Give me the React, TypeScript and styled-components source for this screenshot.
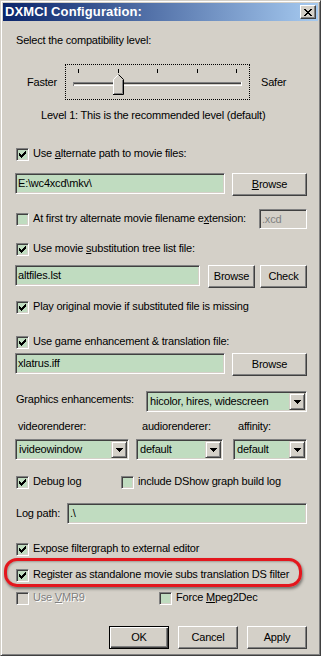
import React from 'react';
import styled, { createGlobalStyle } from 'styled-components';

const FACE = '#d4d0c8';
const GREEN = '#c0dcc0';

const GlobalStyle = createGlobalStyle`
  html, body {
    margin: 0;
    padding: 0;
    background: ${FACE};
  }
  body {
    font-family: "Liberation Sans", Arial, sans-serif;
    font-size: 11px;
    line-height: 13px;
    letter-spacing: -0.2px;
    color: #000;
  }
`;

const Window = styled.div`
  box-sizing: border-box;
  width: 321px;
  height: 656px;
  padding: 2px;
  background: ${FACE};
  border: 1px solid;
  border-color: ${FACE} #404040 #404040 ${FACE};
  box-shadow: inset 1px 1px #fff, inset -1px -1px #808080;
  display: flex;
  flex-direction: column;
`;

const TitleBar = styled.div`
  height: 18px;
  flex: none;
  display: flex;
  align-items: center;
  justify-content: space-between;
  padding: 0 2px;
  background: linear-gradient(to right, #0a246a, #a6caf0);
`;

const Title = styled.span`
  font-weight: bold;
  font-size: 13px;
  line-height: 18px;
  letter-spacing: 0.1px;
  color: #fff;
`;

const CloseButton = styled.div`
  box-sizing: border-box;
  width: 16px;
  height: 14px;
  background: ${FACE};
  border: 1px solid;
  border-color: #fff #404040 #404040 #fff;
  box-shadow: inset -1px -1px #808080;
  display: flex;
  align-items: center;
  justify-content: center;
`;

const Body = styled.div`
  display: flex;
  flex-direction: column;
  padding: 13px 11px 0 12px;
`;

const Text = styled.div<{ $mt?: number; $ml?: number }>`
  margin-top: ${p => p.$mt || 0}px;
  margin-left: ${p => p.$ml || 0}px;
  white-space: nowrap;
`;

const Key = styled.span`
  text-decoration: underline;
`;

const SliderRow = styled.div`
  display: flex;
  align-items: center;
  margin-top: 17px;
  padding-left: 12px;
`;

const SliderLabel = styled.span<{ $w?: number; $ml?: number }>`
  width: ${p => (p.$w ? p.$w + 'px' : 'auto')};
  margin-left: ${p => p.$ml || 0}px;
`;

const SliderBox = styled.div`
  box-sizing: border-box;
  width: 185px;
  height: 36px;
  border: 1px dotted #000;
  svg {
    display: block;
  }
`;

const CheckRow = styled.div<{ $mt?: number }>`
  position: relative;
  display: flex;
  align-items: flex-start;
  margin-top: ${p => p.$mt || 0}px;
`;

const Box = styled.span<{ $disabled?: boolean }>`
  box-sizing: border-box;
  flex: none;
  width: 13px;
  height: 13px;
  margin: 1px 0 0 1px;
  border: 1px solid;
  border-color: #808080 #fff #fff #808080;
  box-shadow: inset 1px 1px #404040, inset -1px -1px ${FACE};
  background: ${p => (p.$disabled ? FACE : GREEN)};
  display: flex;
  align-items: center;
  justify-content: center;
`;

const CheckLabel = styled.span<{ $disabled?: boolean }>`
  padding-left: 4px;
  white-space: nowrap;
  color: ${p => (p.$disabled ? '#808080' : '#000')};
  text-shadow: ${p => (p.$disabled ? '1px 1px #fff' : 'none')};
`;

const Highlight = styled.span`
  position: absolute;
  left: -11px;
  top: -10px;
  width: 298px;
  height: 29px;
  box-sizing: border-box;
  border: 3px solid #e3161d;
  border-radius: 13px;
  box-shadow: 1px 2px 3px rgba(0, 0, 0, 0.45), inset 1px 1px 2px rgba(0, 0, 0, 0.25);
  pointer-events: none;
`;

const FieldRow = styled.div<{ $mt?: number; $align?: string }>`
  display: flex;
  align-items: ${p => p.$align || 'flex-start'};
  margin-top: ${p => p.$mt || 0}px;
`;

const Edit = styled.div<{ $w: number; $h?: number; $disabled?: boolean; $push?: boolean }>`
  box-sizing: border-box;
  flex: none;
  width: ${p => p.$w}px;
  height: ${p => p.$h || 21}px;
  margin-left: ${p => (p.$push ? 'auto' : '0')};
  padding: 0 2px;
  border: 1px solid;
  border-color: #808080 #fff #fff #808080;
  box-shadow: inset 1px 1px #404040, inset -1px -1px ${FACE};
  background: ${p => (p.$disabled ? FACE : GREEN)};
  color: ${p => (p.$disabled ? '#808080' : '#000')};
  display: flex;
  align-items: center;
  white-space: nowrap;
  overflow: hidden;
`;

const Button = styled.div<{ $w: number; $gap?: number; $default?: boolean }>`
  box-sizing: border-box;
  flex: none;
  width: ${p => p.$w}px;
  height: 23px;
  margin-left: ${p => p.$gap || 0}px;
  background: ${FACE};
  border: 1px solid;
  border-color: ${p => (p.$default ? '#000' : '#fff #404040 #404040 #fff')};
  box-shadow: ${p =>
    p.$default
      ? 'inset 1px 1px #fff, inset -1px -1px #404040, inset -2px -2px #808080'
      : 'inset -1px -1px #808080'};
  display: flex;
  align-items: center;
  justify-content: center;
`;

const Combo = styled.div<{ $w: number; $push?: boolean }>`
  box-sizing: border-box;
  width: ${p => p.$w}px;
  height: 21px;
  margin-left: ${p => (p.$push ? 'auto' : '0')};
  padding: 1px;
  border: 1px solid;
  border-color: #808080 #fff #fff #808080;
  box-shadow: inset 1px 1px #404040, inset -1px -1px ${FACE};
  background: ${GREEN};
  display: flex;
`;

const ComboText = styled.span`
  flex: 1;
  padding-left: 2px;
  display: flex;
  align-items: center;
  white-space: nowrap;
`;

const ComboButton = styled.span`
  box-sizing: border-box;
  width: 16px;
  height: 17px;
  background: ${FACE};
  border: 1px solid;
  border-color: ${FACE} #404040 #404040 ${FACE};
  box-shadow: inset 1px 1px #fff, inset -1px -1px #808080;
  display: flex;
  align-items: center;
  justify-content: center;
`;

const RendererGrid = styled.div`
  display: grid;
  grid-template-columns: 121px 97px 74px;
  row-gap: 6px;
  margin-top: 8px;
`;

const GridLabel = styled.span<{ $pl: number }>`
  padding-left: ${p => p.$pl}px;
`;

const PairRow = styled.div<{ $mt: number; $col: number }>`
  display: grid;
  grid-template-columns: ${p => p.$col}px auto;
  margin-top: ${p => p.$mt}px;
`;

const ButtonBar = styled.div`
  display: flex;
  justify-content: flex-end;
  margin-top: 21px;
`;

const CheckMark = () => (
  <svg width="7" height="7" viewBox="0 0 7 7" shapeRendering="crispEdges">
    {[2, 3, 4, 3, 2, 1, 0].map((y, x) => (
      <rect key={x} x={x} y={y} width="1" height="3" fill="#000" />
    ))}
  </svg>
);

const CloseGlyph = () => (
  <svg width="8" height="7" viewBox="0 0 8 7" shapeRendering="crispEdges">
    <rect x="0" y="0" width="2" height="1" />
    <rect x="6" y="0" width="2" height="1" />
    <rect x="1" y="1" width="2" height="1" />
    <rect x="5" y="1" width="2" height="1" />
    <rect x="2" y="2" width="4" height="1" />
    <rect x="3" y="3" width="2" height="1" />
    <rect x="2" y="4" width="4" height="1" />
    <rect x="1" y="5" width="2" height="1" />
    <rect x="5" y="5" width="2" height="1" />
    <rect x="0" y="6" width="2" height="1" />
    <rect x="6" y="6" width="2" height="1" />
  </svg>
);

const DownArrow = () => (
  <svg width="7" height="4" viewBox="0 0 7 4" shapeRendering="crispEdges">
    <rect x="0" y="0" width="7" height="1" />
    <rect x="1" y="1" width="5" height="1" />
    <rect x="2" y="2" width="3" height="1" />
    <rect x="3" y="3" width="1" height="1" />
  </svg>
);

const TrackBar = () => (
  <svg width="183" height="34" viewBox="0 0 183 34" shapeRendering="crispEdges">
    {[12, 52, 91, 131, 170].map(x => (
      <rect key={x} x={x} y="4" width="1" height="4" fill="#000" />
    ))}
    <rect x="7" y="17" width="169" height="1" fill="#808080" />
    <rect x="7" y="18" width="169" height="1" fill="#404040" />
    <rect x="7" y="19" width="169" height="1" fill="#d4d0c8" />
    <rect x="7" y="20" width="169" height="1" fill="#fff" />
    <rect x="7" y="17" width="1" height="4" fill="#808080" />
    <rect x="175" y="17" width="1" height="4" fill="#fff" />
    <polygon points="47,15 52.5,9.5 58,15 58,30 47,30" fill="#d4d0c8" shapeRendering="auto" />
    <path d="M47.5 29.5 V14.5 L52.5 9.5" stroke="#fff" fill="none" shapeRendering="auto" />
    <path d="M52.5 9.5 L57.5 14.5 V29.5 H47" stroke="#000" fill="none" shapeRendering="auto" />
    <path d="M56.5 15 V28.5 H48" stroke="#808080" fill="none" shapeRendering="auto" />
  </svg>
);

const Check: React.FC<{ checked?: boolean; disabled?: boolean; children: React.ReactNode }> = ({
  checked,
  disabled,
  children,
}) => (
  <>
    <Box $disabled={disabled}>{checked && <CheckMark />}</Box>
    <CheckLabel $disabled={disabled}>{children}</CheckLabel>
  </>
);

const App: React.FC = () => (
  <>
    <GlobalStyle />
    <Window>
      <TitleBar>
        <Title>DXMCI Configuration:</Title>
        <CloseButton>
          <CloseGlyph />
        </CloseButton>
      </TitleBar>
      <Body>
        <Text $ml={1}>Select the compatibility level:</Text>
        <SliderRow>
          <SliderLabel $w={38}>Faster</SliderLabel>
          <SliderBox>
            <TrackBar />
          </SliderBox>
          <SliderLabel $ml={11}>Safer</SliderLabel>
        </SliderRow>
        <Text $mt={9} $ml={26}>
          Level 1: This is the recommended level (default)
        </Text>

        <CheckRow $mt={25}>
          <Check checked>
            Use <Key>a</Key>lternate path to movie files:
          </Check>
        </CheckRow>
        <FieldRow $mt={12}>
          <Edit $w={210}>E:\wc4xcd\mkv\</Edit>
          <Button $w={75} $gap={7}>
            <span>
              <Key>B</Key>rowse
            </span>
          </Button>
        </FieldRow>

        <FieldRow $mt={13} $align="center">
          <CheckRow>
            <Check>
              At first try alternate movie filename e<Key>x</Key>tension:
            </Check>
          </CheckRow>
          <Edit $w={48} $h={20} $disabled $push>
            .xcd
          </Edit>
        </FieldRow>

        <CheckRow $mt={13}>
          <Check checked>
            Use movie <Key>s</Key>ubstitution tree list file:
          </Check>
        </CheckRow>
        <FieldRow $mt={9}>
          <Edit $w={185}>altfiles.lst</Edit>
          <Button $w={47} $gap={8}>
            Browse
          </Button>
          <Button $w={47} $gap={5}>
            Check
          </Button>
        </FieldRow>

        <CheckRow $mt={12}>
          <Check checked>Play original movie if substituted file is missing</Check>
        </CheckRow>

        <CheckRow $mt={21}>
          <Check checked>Use game enhancement &amp; translation file:</Check>
        </CheckRow>
        <FieldRow $mt={4}>
          <Edit $w={210}>xlatrus.iff</Edit>
          <Button $w={75} $gap={7}>
            Browse
          </Button>
        </FieldRow>

        <FieldRow $mt={15}>
          <Text $mt={2} $ml={1}>
            Graphics enhancements:
          </Text>
          <Combo $w={161} $push>
            <ComboText>hicolor, hires, widescreen</ComboText>
            <ComboButton>
              <DownArrow />
            </ComboButton>
          </Combo>
        </FieldRow>

        <RendererGrid>
          <GridLabel $pl={3}>videorenderer:</GridLabel>
          <GridLabel $pl={6}>audiorenderer:</GridLabel>
          <GridLabel $pl={5}>affinity:</GridLabel>
          <Combo $w={114}>
            <ComboText>ivideowindow</ComboText>
            <ComboButton>
              <DownArrow />
            </ComboButton>
          </Combo>
          <Combo $w={87}>
            <ComboText>default</ComboText>
            <ComboButton>
              <DownArrow />
            </ComboButton>
          </Combo>
          <Combo $w={74}>
            <ComboText>default</ComboText>
            <ComboButton>
              <DownArrow />
            </ComboButton>
          </Combo>
        </RendererGrid>

        <PairRow $mt={15} $col={105}>
          <CheckRow>
            <Check checked>Debug log</Check>
          </CheckRow>
          <CheckRow>
            <Check>include DShow graph build log</Check>
          </CheckRow>
        </PairRow>

        <FieldRow $mt={14} $align="center">
          <Text $ml={1}>Log path:</Text>
          <Edit $w={240} $push>
            .\
          </Edit>
        </FieldRow>

        <CheckRow $mt={18}>
          <Check checked>Expose filtergraph to external editor</Check>
        </CheckRow>

        <CheckRow $mt={12}>
          <Check checked>Register as standalone movie subs translation DS filter</Check>
          <Highlight />
        </CheckRow>

        <PairRow $mt={9} $col={143}>
          <CheckRow>
            <Check disabled>
              Use <Key>V</Key>MR9
            </Check>
          </CheckRow>
          <CheckRow>
            <Check>
              Force <Key>M</Key>peg2Dec
            </Check>
          </CheckRow>
        </PairRow>

        <ButtonBar>
          <Button $w={60} $default>
            OK
          </Button>
          <Button $w={60} $gap={9}>
            Cancel
          </Button>
          <Button $w={60} $gap={9}>
            Apply
          </Button>
        </ButtonBar>
      </Body>
    </Window>
  </>
);

export default App;
